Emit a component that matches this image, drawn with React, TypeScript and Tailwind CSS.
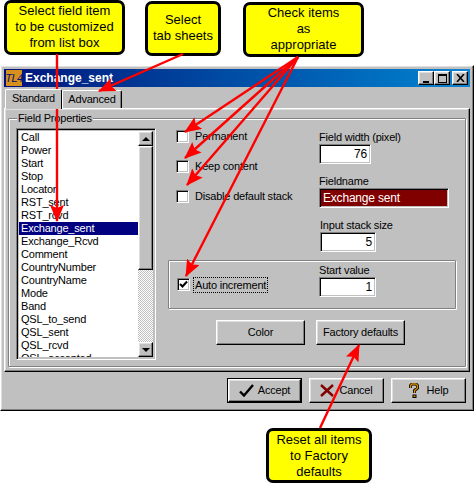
const raised =
  "border border-t-white border-l-white border-r-black border-b-black shadow-[inset_-1px_-1px_0_#808080,inset_1px_1px_0_#dfdfdf]";
const sunken =
  "border border-t-[#808080] border-l-[#808080] border-r-white border-b-white shadow-[inset_1px_1px_0_#000000,inset_-1px_-1px_0_#c0c0c0]";

const fields = [
  "Call",
  "Power",
  "Start",
  "Stop",
  "Locator",
  "RST_sent",
  "RST_rcvd",
  "Exchange_sent",
  "Exchange_Rcvd",
  "Comment",
  "CountryNumber",
  "CountryName",
  "Mode",
  "Band",
  "QSL_to_send",
  "QSL_sent",
  "QSL_rcvd",
  "QSL_accepted",
];

function Callout({ className, lines }: { className: string; lines: string[] }) {
  return (
    <div
      className={`absolute flex flex-col items-center justify-center rounded-[7px] border-[3px] border-black bg-[#ffff00] text-[13px] leading-[16px] tracking-normal text-black ${className}`}
    >
      {lines.map((line) => (
        <span key={line}>{line}</span>
      ))}
    </div>
  );
}

function CheckBox({ label, checked, focused }: { label: string; checked?: boolean; focused?: boolean }) {
  return (
    <div className="flex h-[13px] items-center gap-[3px]">
      <div className={`flex h-[13px] w-[13px] shrink-0 items-center justify-center bg-white ${sunken}`}>
        {checked && (
          <svg width="9" height="9" viewBox="0 0 9 9">
            <path d="M1 4 L3.5 6.5 L8 1.5" fill="none" stroke="black" strokeWidth="2" />
          </svg>
        )}
      </div>
      <span className={focused ? "border border-dotted border-black px-px leading-[14px]" : "pl-[3px]"}>{label}</span>
    </div>
  );
}

function Field({ label, value, width, dark }: { label: string; value: string; width: string; dark?: boolean }) {
  return (
    <div className="flex flex-col">
      <span className="h-[15px] leading-[16px]">{label}</span>
      <div
        className={`flex h-[20px] items-center px-[3px] text-[12px] ${width} ${sunken} ${
          dark ? "bg-[#800000] text-[11px] text-white" : "justify-end bg-white text-black"
        }`}
      >
        {value}
      </div>
    </div>
  );
}

function Button({ children, className }: { children: React.ReactNode; className: string }) {
  return (
    <div className={`flex items-center justify-center bg-[#c0c0c0] ${raised} ${className}`}>{children}</div>
  );
}

function TitleButton({ children, className = "" }: { children: React.ReactNode; className?: string }) {
  return (
    <div className={`flex h-[14px] w-[16px] items-center justify-center bg-[#c0c0c0] ${raised} ${className}`}>
      {children}
    </div>
  );
}

export default function App() {
  return (
    <div className="relative h-[487px] w-[475px] overflow-hidden bg-white pt-[65px] font-['Liberation_Sans',Arial,sans-serif] text-[11px] tracking-[-0.2px] text-black">
      <div className={`h-[346px] w-[474px] bg-[#c0c0c0] p-[3px] ${raised}`}>
        {/* title bar */}
        <div className="flex h-[18px] items-center bg-gradient-to-r from-[#00107c] to-[#1084d0] pl-[2px] pr-[2px]">
          <div className="flex h-[16px] w-[16px] items-center justify-center overflow-hidden bg-[#d8901c] text-[11px] italic tracking-[-0.5px] text-[#00107c]">
            TL4
          </div>
          <span className="ml-[3px] text-[12px] font-bold tracking-normal text-white">Exchange_sent</span>
          <div className="ml-auto flex">
            <TitleButton>
              <div className="mt-[7px] h-[2px] w-[6px] bg-black" />
            </TitleButton>
            <TitleButton>
              <div className="h-[9px] w-[9px] border border-t-2 border-black" />
            </TitleButton>
            <TitleButton className="ml-[2px]">
              <svg width="9" height="8" viewBox="0 0 9 8">
                <path d="M1 0 L8 8 M8 0 L1 8" stroke="black" strokeWidth="1.6" />
              </svg>
            </TitleButton>
          </div>
        </div>

        {/* tabs */}
        <div className="flex h-[21px] items-end pl-[1px] pt-[1px]">
          <div className="relative z-10 -mb-px flex h-[20px] w-[57px] items-center justify-center rounded-t-[2px] border border-b-0 border-t-white border-l-white border-r-black bg-[#c0c0c0] pb-[2px]">
            Standard
          </div>
          <div className="flex h-[18px] w-[60px] items-center justify-center rounded-t-[2px] border border-b-0 border-t-white border-l-white border-r-black bg-[#c0c0c0] shadow-[inset_-1px_0_0_#808080]">
            Advanced
          </div>
        </div>

        {/* tab sheet */}
        <div className={`h-[264px] w-[466px] px-[3px] pt-[9px] ${raised}`}>
          <div className="relative h-[249px] rounded-[1px] border border-[#808080] shadow-[1px_1px_0_#ffffff,inset_1px_1px_0_#ffffff]">
            <span className="absolute left-[8px] top-[-8px] bg-[#c0c0c0] px-[1px] leading-[14px]">Field Properties</span>
            <div className="flex pl-[7px] pt-[9px]">
              {/* list box */}
              <div className={`flex h-[232px] w-[140px] shrink-0 p-[2px] ${sunken}`}>
                <div className="h-full w-[121px] overflow-hidden bg-white">
                  {fields.map((name) => (
                    <div
                      key={name}
                      className={`h-[13px] pl-[2px] leading-[13px] ${
                        name === "Exchange_sent" ? "bg-[#000080] text-white" : "text-black"
                      }`}
                    >
                      {name}
                    </div>
                  ))}
                </div>
                <div className="flex h-full w-[15px] flex-col bg-[repeating-conic-gradient(#c0c0c0_0%_25%,#ffffff_0%_50%)] bg-[length:2px_2px]">
                  <div className={`flex h-[15px] items-center justify-center bg-[#c0c0c0] ${raised}`}>
                    <div className="h-0 w-0 border-x-[4px] border-b-[4px] border-x-transparent border-b-black" />
                  </div>
                  <div className={`h-[124px] bg-[#c0c0c0] ${raised}`} />
                  <div className={`mt-auto flex h-[15px] items-center justify-center bg-[#c0c0c0] ${raised}`}>
                    <div className="h-0 w-0 border-x-[4px] border-t-[4px] border-x-transparent border-t-black" />
                  </div>
                </div>
              </div>

              {/* right column */}
              <div className="ml-[12px] flex w-[288px] flex-col">
                <div className="flex h-[132px]">
                  <div className="flex w-[151px] flex-col gap-[17px] pl-[8px] pt-[2px]">
                    <CheckBox label="Permanent" />
                    <CheckBox label="Keep content" />
                    <CheckBox label="Disable default stack" />
                  </div>
                  <div className="flex flex-col gap-[9px] pt-[1px]">
                    <Field label="Field width (pixel)" value="76" width="w-[52px]" />
                    <Field label="Fieldname" value="Exchange sent" width="w-[130px]" dark />
                    <div className="pl-px">
                      <Field label="Input stack size" value="5" width="w-[56px]" />
                    </div>
                  </div>
                </div>
                <div className="flex h-[49px] items-start rounded-[1px] border border-[#808080] shadow-[1px_1px_0_#ffffff,inset_1px_1px_0_#ffffff]">
                  <div className="mt-[17px] w-[150px] pl-[8px]">
                    <CheckBox label="Auto increment" checked focused />
                  </div>
                  <div className="pt-[1px]">
                    <Field label="Start value" value="1" width="w-[57px]" />
                  </div>
                </div>
                <div className="mt-[11px] flex gap-[11px] pl-[48px]">
                  <Button className="h-[25px] w-[89px]">Color</Button>
                  <Button className="h-[25px] w-[89px]">Factory defaults</Button>
                </div>
              </div>
            </div>
          </div>
        </div>

        {/* dialog buttons */}
        <div className="mt-[6px] flex justify-end gap-[7px] pr-[4px]">
          <div className="border border-black">
            <Button className="h-[23px] w-[73px] gap-[4px]">
              <svg width="15" height="13" viewBox="0 0 15 13">
                <path d="M1 7.5 L5 11.5 L14 1" fill="none" stroke="black" strokeWidth="2.4" />
              </svg>
              Accept
            </Button>
          </div>
          <Button className="h-[25px] w-[75px] gap-[5px]">
            <svg width="14" height="13" viewBox="0 0 14 13">
              <path d="M1 1 L13 12 M13 1 L1 12" fill="none" stroke="#800000" strokeWidth="2.4" />
            </svg>
            Cancel
          </Button>
          <Button className="h-[25px] w-[75px] gap-[8px]">
            <svg width="10" height="15" viewBox="0 0 10 15">
              <path d="M1.5 5 V2.5 L3 1 H7 L8.5 2.5 V5 L5.5 7.5 V10" fill="none" stroke="black" strokeWidth="3" />
              <rect x="3.5" y="11.5" width="4" height="3.5" fill="black" />
              <path d="M1.5 5 V2.5 L3 1 H7 L8.5 2.5 V5 L5.5 7.5 V10" fill="none" stroke="#d89000" strokeWidth="1.4" />
              <rect x="4.5" y="12.5" width="2" height="1.5" fill="#d89000" />
            </svg>
            Help
          </Button>
        </div>
      </div>

      {/* callouts and arrows lie over the dialog */}
      <Callout className="left-[4px] top-[0px] h-[55px] w-[121px] pb-[2px]" lines={["Select field item", "to be customized", "from list box"]} />
      <Callout className="left-[145px] top-[1px] h-[55px] w-[76px] pb-[2px]" lines={["Select", "tab sheets"]} />
      <Callout className="left-[243px] top-[2px] h-[55px] w-[121px] pb-[2px]" lines={["Check items", "as", "appropriate"]} />
      <Callout className="left-[266px] top-[428px] h-[55px] w-[106px]" lines={["Reset all items", "to Factory", "defaults"]} />

      <svg className="pointer-events-none absolute left-0 top-0" width="475" height="487" viewBox="0 0 475 487">
        <defs>
          <marker id="head" markerUnits="userSpaceOnUse" markerWidth="17" markerHeight="14" refX="16" refY="7" orient="auto">
            <path d="M0 0 L17 7 L0 14 L3 7 Z" fill="#ff0000" />
          </marker>
        </defs>
        <g stroke="#ff0000" strokeWidth="2.4" fill="none">
          <path d="M57 54 L57 221" markerEnd="url(#head)" />
          <path d="M183 54 L99 91" markerEnd="url(#head)" />
          <path d="M298 57 L185 132" markerEnd="url(#head)" />
          <path d="M298 57 L185 158" markerEnd="url(#head)" />
          <path d="M298 57 L187 185" markerEnd="url(#head)" />
          <path d="M298 57 L186 276" markerEnd="url(#head)" />
          <path d="M320 428 L359 345" markerEnd="url(#head)" />
        </g>
      </svg>
    </div>
  );
}
